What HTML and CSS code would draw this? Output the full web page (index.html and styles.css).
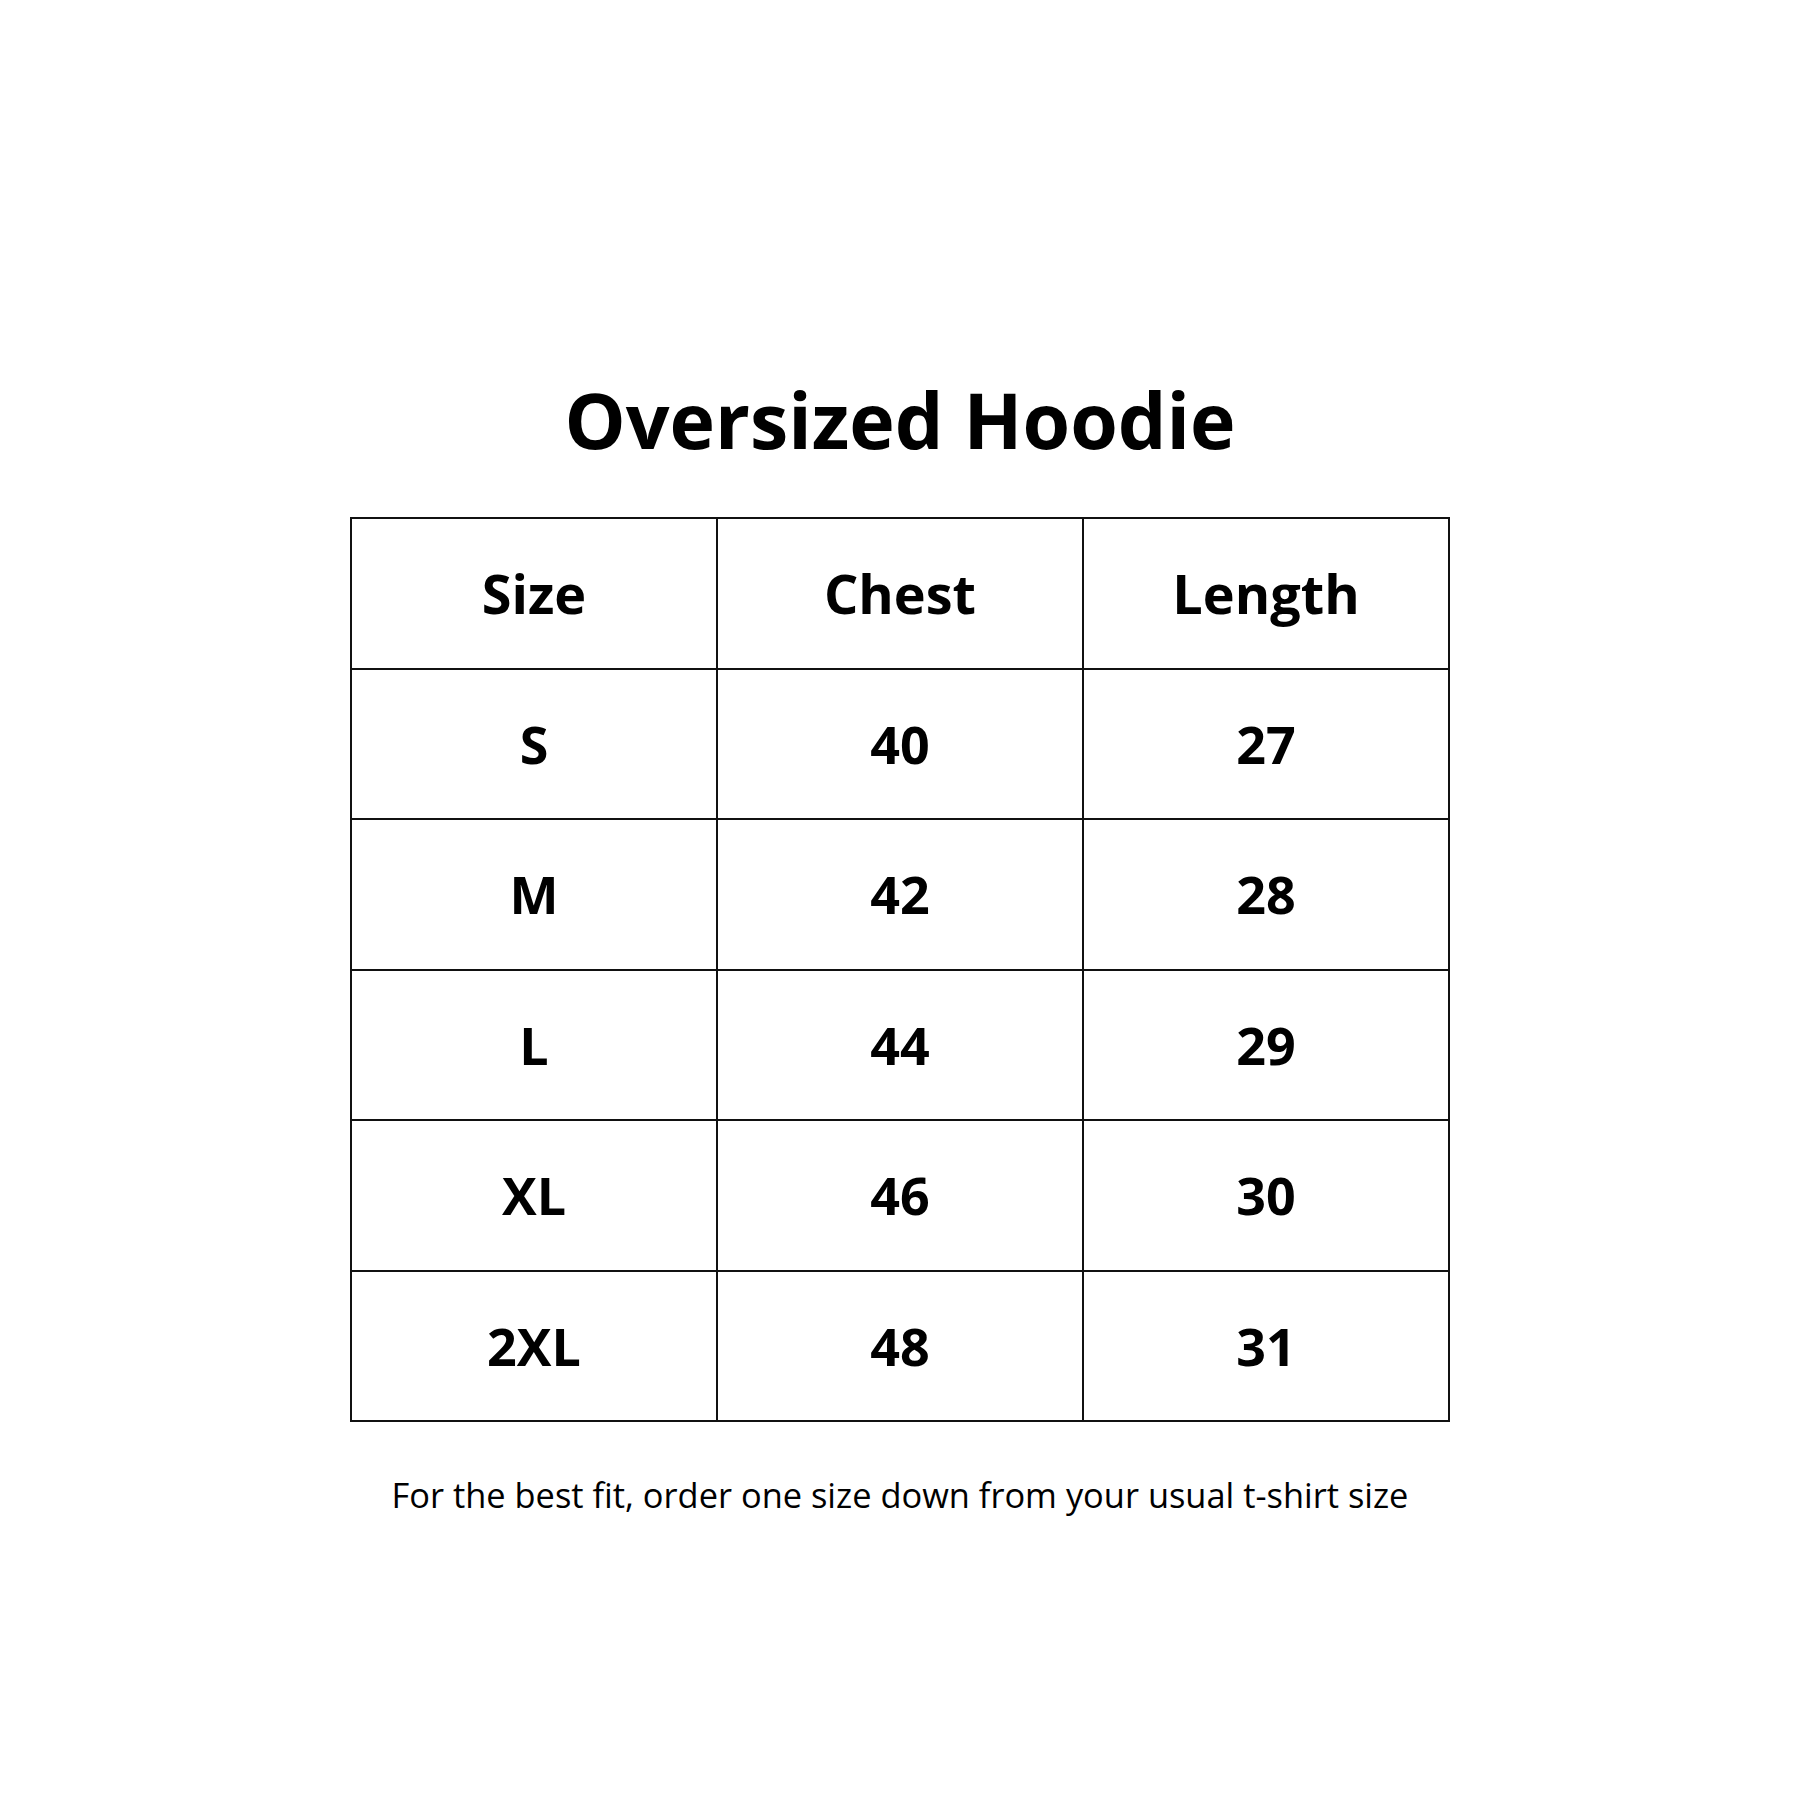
FILE: index.html
```html
<!DOCTYPE html>
<html>
<head>
<meta charset="utf-8">
<link rel="stylesheet" href="styles.css">
</head>
<body>
<main class="page">
  <h1 class="title">Oversized Hoodie</h1>
  <table class="chart">
    <thead>
      <tr><th>Size</th><th>Chest</th><th>Length</th></tr>
    </thead>
    <tbody>
      <tr><td>S</td><td>40</td><td>27</td></tr>
      <tr><td>M</td><td>42</td><td>28</td></tr>
      <tr><td>L</td><td>44</td><td>29</td></tr>
      <tr><td>XL</td><td>46</td><td>30</td></tr>
      <tr><td>2XL</td><td>48</td><td>31</td></tr>
    </tbody>
  </table>
  <p class="note">For the best fit, order one size down from your usual t-shirt size</p>
</main>
</body>
</html>
```
FILE: styles.css
```css
html, body {
  margin: 0;
  padding: 0;
  background: #fff;
}
.page {
  width: 1800px;
  height: 1800px;
  display: flex;
  flex-direction: column;
  align-items: center;
  padding-top: 381px;
  box-sizing: border-box;
  font-family: "Open Sans", "Noto Sans", sans-serif;
  color: #000;
}
.title {
  margin: 0;
  font-size: 77px;
  line-height: 77px;
  font-weight: 700;
}
.chart {
  margin-top: 59px;
  border-collapse: collapse;
  border: 2px solid #111;
}
.chart th, .chart td {
  width: 364px;
  height: 148.5px;
  padding: 0;
  border: 2px solid #111;
  text-align: center;
  vertical-align: middle;
  font-weight: 700;
  line-height: 1;
}
.chart th {
  font-size: 54px;
}
.chart td {
  font-size: 52px;
}
.note {
  margin: 56px 0 0;
  font-size: 34.4px;
  line-height: 34px;
  font-weight: 400;
}
```
